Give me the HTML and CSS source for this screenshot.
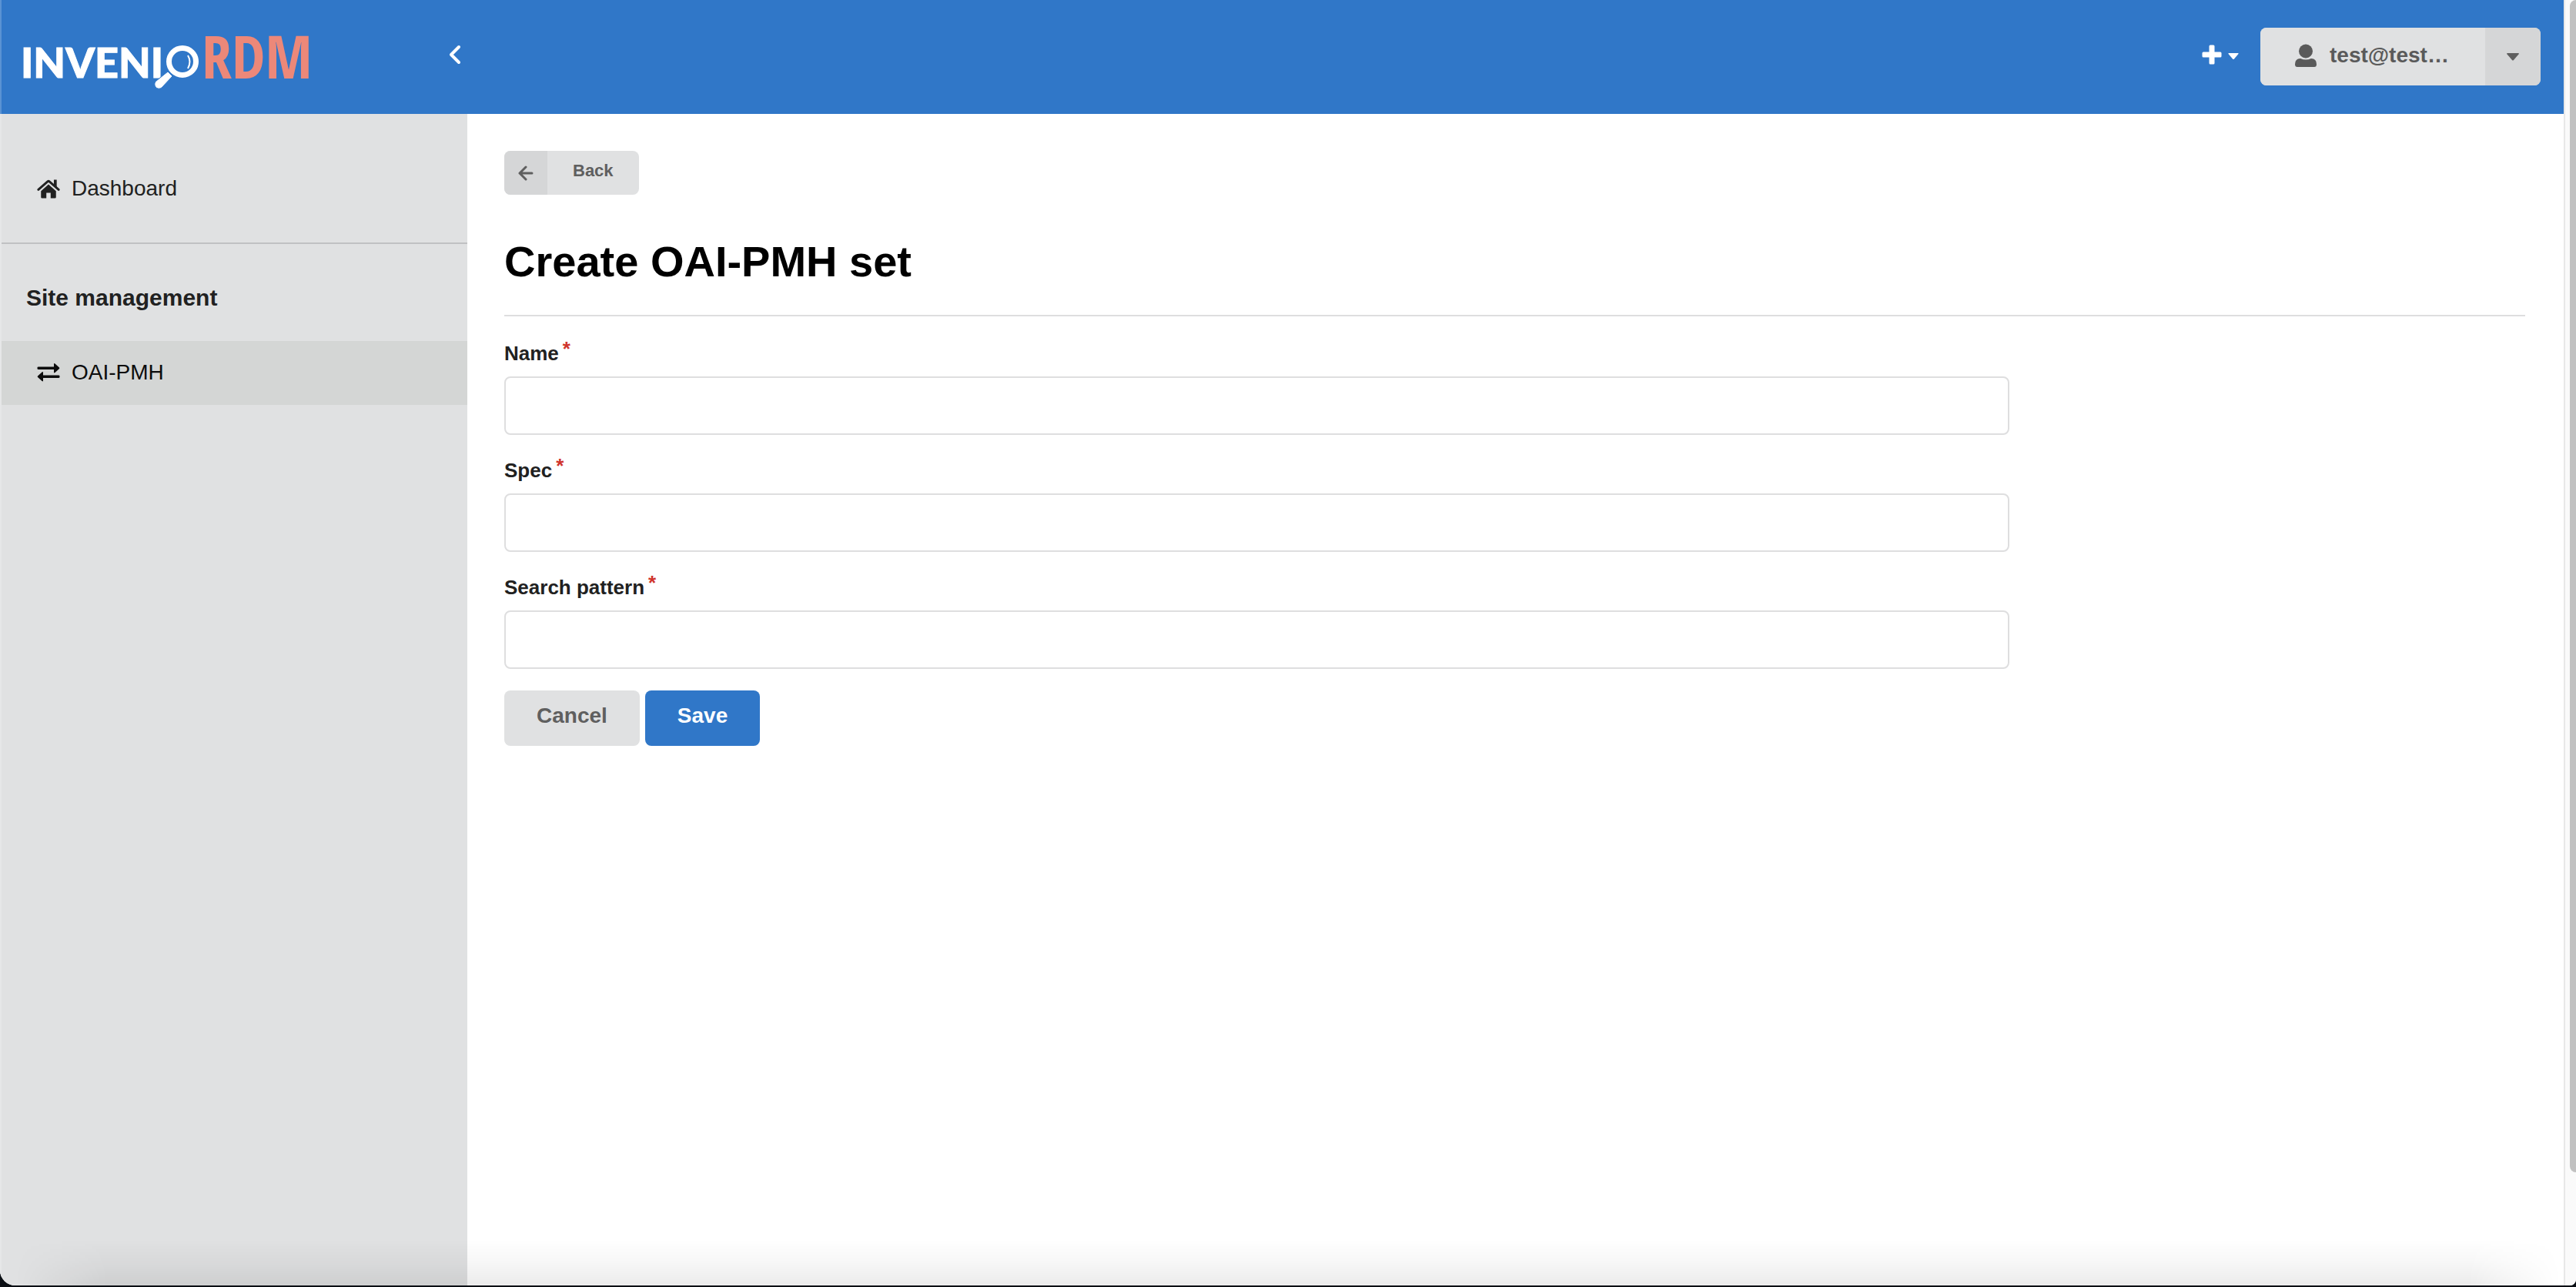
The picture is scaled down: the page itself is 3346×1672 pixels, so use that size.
FILE: index.html
```html
<!DOCTYPE html>
<html lang="en">
<head>
<meta charset="utf-8">
<title>Create OAI-PMH set</title>
<meta name="viewport" content="width=device-width, initial-scale=1">
<link rel="stylesheet" href="styles.css">
</head>
<body>
<div class="window">
  <div class="page">
    <header class="topbar">
      <div class="brand-area">
        <a class="brand" href="#" aria-label="InvenioRDM">
          <svg class="logo" width="400" height="130" viewBox="0 0 400 130">
            <text class="logo-main" x="-1" y="101">INVENI</text>
            <circle cx="209" cy="80" r="17.500" class="lens"/>
            <path class="handle" d="M190 93 175 105a5 5 0 0 0 7 9L196 99z"/>
            <path class="glint" d="M216 72q5 8 0 17"/>
            <text class="logo-rdm" x="234" y="102">RDM</text>
          </svg>
        </a>
        <button class="icon-button" type="button" aria-label="Collapse sidebar">
          <svg width="16" height="26" viewBox="0 0 16 26"><path class="stroke" d="M13 3 3 13l10 10"/></svg>
        </button>
      </div>
      <div class="user-area">
        <button class="icon-button add" type="button" aria-label="Create new">
          <svg width="26" height="26" viewBox="0 0 26 26"><path d="M11 .5h4q1.500 0 1.500 1.500v7.500H24q1.500 0 1.500 1.500v4q0 1.500-1.500 1.500h-7.500V24q0 1.500-1.500 1.500h-4q-1.500 0-1.500-1.500v-7.500H2Q.5 16.500.5 15v-4Q.5 9.500 2 9.500h7.500V2Q9.500.5 11 .5z"/></svg>
          <svg class="add-caret" width="14" height="8" viewBox="0 0 14 8"><path d="M1 0h12q1 0 .5 1L8 7.500q-1 1-2 0L.5 1Q0 0 1 0z"/></svg>
        </button>
        <div class="user-buttons">
          <button class="user" type="button">
            <svg width="30" height="30" viewBox="0 0 30 30"><circle cx="15" cy="9.500" r="9"/><path d="M8 19q7 3 14 0 7 0 7 7.500Q29 30 26 30H4q-3 0-3-3.500Q1 19 8 19z"/></svg>
            <span>test@test…</span>
          </button>
          <button class="user-toggle" type="button" aria-label="Account menu">
            <svg width="16" height="10" viewBox="0 0 16 10"><path d="M1 0h14q1.500 0 .5 1.500L9 9q-1 1-2 0L.5 1.500Q-.5 0 1 0z"/></svg>
          </button>
        </div>
      </div>
    </header>
    <div class="body">
      <nav class="sidebar">
        <a class="item home" href="#">
          <svg width="32" height="26" viewBox="0 0 32 28"><path d="M1.800 15.500 15 4q1-.8 2 0l13.200 11.500" fill="none" stroke="currentColor" stroke-width="3.200" stroke-linecap="round"/><path d="M23.500 1.500h4v11l-4-3.500zM16 8 26.500 17.500V26q0 1.500-1.500 1.500h-6V20h-6v7.500H7q-1.500 0-1.500-1.500v-8.500z"/></svg>
          Dashboard
        </a>
        <h2 class="section">Site management</h2>
        <a class="item active" href="#">
          <svg width="32" height="28" viewBox="0 0 32 28"><path d="M3 6.500h20V3q0-1.500 1.500-.5L30 7.500q.7.800 0 1.500L24.500 14q-1.500 1-1.500-.5V10H3q-1.500 0-1.500-1V7.500Q1.500 6.500 3 6.500zM29 17.500H9V14q0-1.500-1.500-.5L2 18.500q-.7.800 0 1.500L7.500 25Q9 26 9 24.500V21h20q1.500 0 1.500-1v-1.500q0-1-1.500-1z"/></svg>
          OAI-PMH
        </a>
      </nav>
      <main class="content">
        <button class="back" type="button">
          <span class="back-icon"><svg width="20" height="20" viewBox="0 0 20 20"><path class="stroke" d="M10 2 2 10l8 8M2 10h16"/></svg></span>
          <span class="back-label">Back</span>
        </button>
        <h1>Create OAI-PMH set</h1>
        <form class="form">
          <div class="field">
            <label for="name">Name<span class="required">*</span></label>
            <input id="name" type="text">
          </div>
          <div class="field">
            <label for="spec">Spec<span class="required">*</span></label>
            <input id="spec" type="text">
          </div>
          <div class="field">
            <label for="pattern">Search pattern<span class="required">*</span></label>
            <input id="pattern" type="text">
          </div>
          <div class="actions">
            <button class="button" type="button">Cancel</button>
            <button class="button primary" type="button">Save</button>
          </div>
        </form>
      </main>
    </div>
  </div>
  <div class="scroll-track"><div class="scroll-thumb"></div></div>
</div>
</body>
</html>
```

FILE: styles.css
```css
* {
  box-sizing: border-box;
}

body {
  margin: 0;
  background: #0b0f14;
  color: #212121;
  font-family: "Liberation Sans", Arial, sans-serif;
  font-size: 28px;
  line-height: 32px;
}

button {
  margin: 0;
  padding: 0;
  border: 0;
  font: inherit;
  cursor: pointer;
}

a {
  color: inherit;
  text-decoration: none;
}

svg {
  display: block;
  flex: none;
  fill: currentColor;
}

.stroke {
  fill: none;
  stroke: currentColor;
  stroke-width: 4;
  stroke-linecap: round;
  stroke-linejoin: round;
}

.window {
  position: relative;
  display: flex;
  height: calc(100vh - 2px);
  overflow: hidden;
  background: #fff;
  border-radius: 0 0 8px 20px;
}

/* Soft shade along the lower edge of the window */
.window::after {
  content: "";
  position: absolute;
  inset: auto 0 0;
  height: 60px;
  background: linear-gradient(transparent, rgba(0, 0, 0, 0.03) 50%, rgba(0, 0, 0, 0.08));
  mask-image: linear-gradient(90deg, transparent 20px, #000 140px, #000 calc(100% - 140px), transparent calc(100% - 20px));
  pointer-events: none;
}

.page {
  flex: 1;
  display: flex;
  flex-direction: column;
}

.topbar {
  display: flex;
  justify-content: space-between;
  height: 148px;
  border-left: 2px solid #5a92d3;
  background: #3077c8;
  color: #fff;
}

.brand-area {
  display: flex;
  justify-content: space-between;
  width: 605px;
  padding: 0 8px 0 26px;
}

.logo-main {
  font: 900 54px Lato, sans-serif;
  stroke: #fff;
  stroke-width: 1;
}

.logo-rdm {
  fill: #ec8879;
  font: 700 78px "Noto Sans ExtraCondensed", "Open Sans Condensed", "Roboto Condensed", "Liberation Sans Narrow", "DejaVu Sans Condensed", sans-serif;
}

.lens {
  fill: #3077c8;
  stroke: #fff;
  stroke-width: 7;
}

.handle {
  stroke: #3077c8;
  stroke-width: 1;
}

.glint {
  fill: none;
  stroke: #fff;
  stroke-width: 2;
}

.icon-button {
  display: flex;
  align-items: center;
  gap: 8px;
  height: 26px;
  margin-top: 58px;
  background: none;
  color: #fff;
}

.user-area {
  display: flex;
  align-items: flex-start;
  gap: 28px;
  padding: 0 30px 0 0;
}

.add-caret {
  margin-top: 4px;
}

.user-buttons {
  display: flex;
  height: 75px;
  margin-top: 36px;
  overflow: hidden;
  border-radius: 8px;
  background: #e0e1e2;
}

.user {
  display: flex;
  align-items: center;
  gap: 16px;
  width: 292px;
  padding: 0 0 4px 44px;
  background: #e0e1e2;
  color: #5a5a5a;
  font-weight: 700;
}

.user-toggle {
  display: grid;
  place-items: center;
  width: 72px;
  background: #d5d6d7;
  color: #5f5f5f;
}

.body {
  flex: 1;
  display: flex;
}

.sidebar {
  width: 607px;
  background: #e0e1e2;
  border-left: 2px solid #e6e7e8;
}

.item {
  display: flex;
  align-items: center;
  gap: 14px;
  height: 83px;
  padding: 0 0 2px 45px;
}

.home {
  height: 169px;
  padding-top: 28px;
  border-bottom: 2px solid #c0c1c3;
}

.section {
  margin: 0;
  padding: 54px 32px 40px;
  font-size: 30px;
  line-height: 32px;
}

.active {
  background: #d4d6d5;
  color: #0c0c0c;
}

.content {
  flex: 1;
  padding: 48px 50px 0 48px;
}

.back {
  display: flex;
  height: 57px;
  overflow: hidden;
  border-radius: 8px;
  background: #e0e1e2;
  color: #5f5f5f;
  font-size: 22px;
  font-weight: 700;
}

.back-icon {
  display: grid;
  place-items: center;
  width: 56px;
  height: 57px;
  background: #d5d6d7;
}

.back-icon .stroke {
  stroke-width: 3;
}

.back-label {
  width: 119px;
  padding: 10px 0 0 33px;
  text-align: left;
}

h1 {
  margin: 53px 0 0;
  padding-bottom: 35px;
  border-bottom: 2px solid #dededf;
  color: #000;
  font-size: 56px;
  line-height: 68px;
}

.form {
  width: calc(75% - 14px);
  padding-top: 30px;
}

.field {
  margin-bottom: 28px;
}

label {
  display: block;
  height: 48px;
  padding-top: 2px;
  font-size: 26px;
  font-weight: 700;
}

.required {
  margin-left: 5px;
  color: #d0342c;
  font-size: 26px;
  line-height: 0;
  vertical-align: 6px;
}

input {
  display: block;
  width: 100%;
  height: 76px;
  padding: 0 28px;
  border: 2px solid #dededf;
  border-radius: 8px;
  background: #fff;
  font: inherit;
}

.actions {
  display: flex;
  gap: 7px;
}

.button {
  height: 72px;
  padding: 0 42px 6px;
  border-radius: 8px;
  background: #e0e1e2;
  color: #5f5f5f;
  font-weight: 700;
}

.primary {
  background: #3077c8;
  color: #fff;
}

.scroll-track {
  width: 16px;
  padding-left: 6px;
  border-left: 2px solid #e8e8e8;
  background: #fafafa;
}

.scroll-thumb {
  height: 91.2%;
  border-radius: 8px 0 0 8px;
  background: #c1c1c1;
}
```
